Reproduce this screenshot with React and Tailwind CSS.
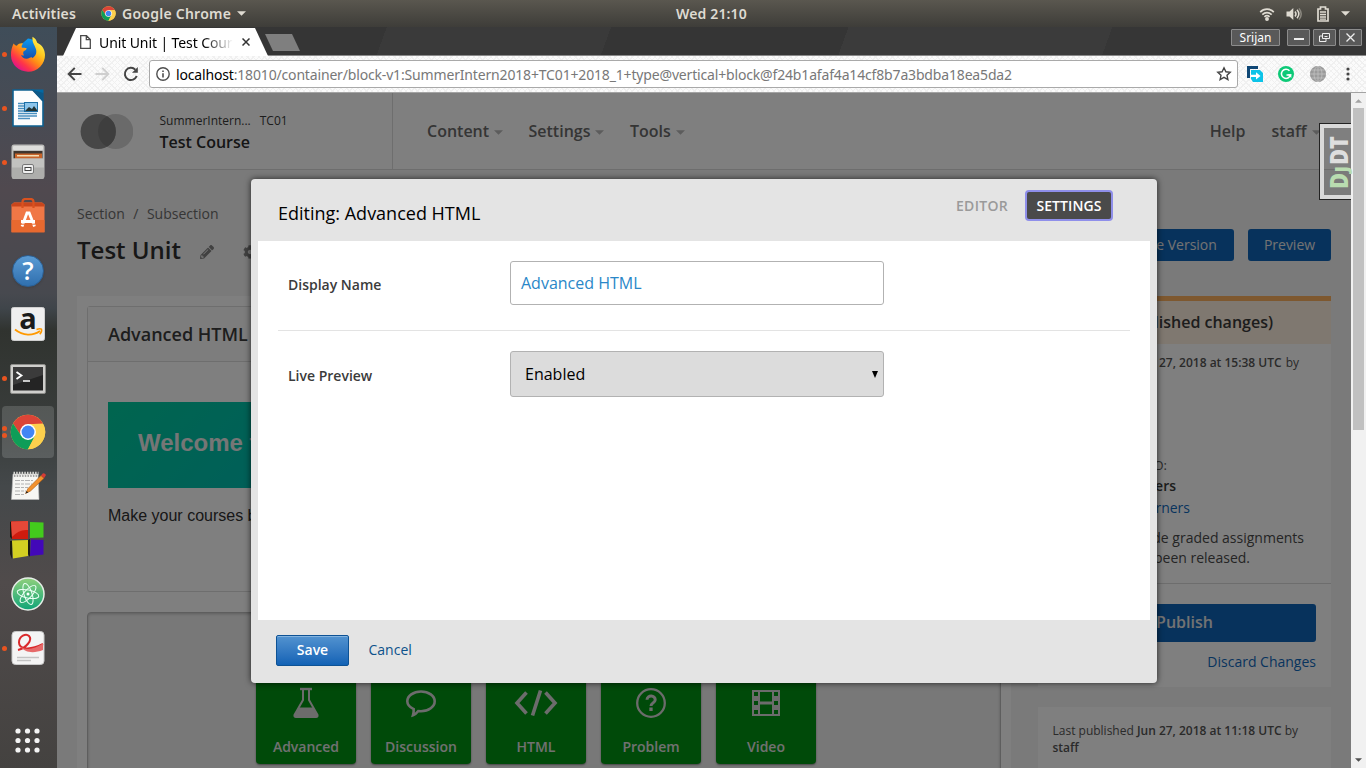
import React from "react";
import { FaPencilAlt, FaCog } from "react-icons/fa";

/* ---------- shared marks ---------- */

function ChromeLogo({ className }) {
  return (
    <svg viewBox="0 0 48 48" className={className}>
      <circle cx="24" cy="24" r="23" fill="#fdd04d" />
      <path d="M4.1 12.5 A23 23 0 0 1 43.9 12.5 L24 13.5 L15 29 Z" fill="#db4437" />
      <path d="M4.1 12.5 A23 23 0 0 0 24 47 L33.5 29.5 L24 34 L15 29 Z" fill="#0f9d58" />
      <path d="M24 13.5 H44.5 A23 23 0 0 1 24 47 L33.1 29.3 Z" fill="#fdd04d" />
      <circle cx="24" cy="24" r="10.6" fill="#fff" />
      <circle cx="24" cy="24" r="8.6" fill="#4285f4" />
    </svg>
  );
}

function Caret({ className }) {
  return (
    <svg viewBox="0 0 10 5" className={className} fill="currentColor">
      <path d="M0 0h10L5 5z" />
    </svg>
  );
}

/* ---------- desktop top bar ---------- */

function TopBar() {
  return (
    <div className="flex h-[27px] w-full shrink-0 items-center bg-linear-to-b from-[#5a574f] to-[#3e3d39] font-['Noto_Sans','Open_Sans',sans-serif] text-[14px] font-semibold text-[#dfdbd2]">
      <div className="w-[89px] pl-3 tracking-[0.15px]">Activities</div>
      <div className="flex w-[587px] items-center pl-3">
        <ChromeLogo className="h-[15px] w-[15px]" />
        <span className="ml-[6px] tracking-[0.25px]">Google Chrome</span>
        <Caret className="ml-[6px] h-[5px] w-[9px]" />
      </div>
      <div className="flex-1 tracking-[0.15px]">Wed 21:10</div>
      <div className="flex items-center pr-4">
        <svg viewBox="0 0 16 14" className="h-[14px] w-4" fill="none" stroke="#dfdbd2" strokeWidth="1.7">
          <path d="M1.2 5.2C5 1.2 11 1.2 14.8 5.2" />
          <path d="M3.3 7.6c2.7-2.6 6.7-2.6 9.4 0" />
          <path d="M5.4 9.9c1.5-1.4 3.7-1.4 5.2 0" />
          <circle cx="8" cy="12" r="1.1" fill="#dfdbd2" />
        </svg>
        <svg viewBox="0 0 16 14" className="ml-[11px] h-[14px] w-4" fill="none" stroke="#dfdbd2" strokeWidth="1.5">
          <path d="M.5 4.5h3L7.3 1v12L3.5 9.500h-3z" fill="#dfdbd2" stroke="none" />
          <path d="M9 4.500c1.200 1.500 1.200 3.500 0 5" />
          <path d="M11 2.800c2.200 2.500 2.200 5.900 0 8.400" />
          <path d="M13 1.400c2.700 3.400 2.700 7.800 0 11.200" stroke="#8a877f" />
        </svg>
        <svg viewBox="0 0 12 16" className="ml-[15px] h-4 w-3" fill="none" stroke="#dfdbd2" strokeWidth="1.700">
          <path d="M1 3h2.500V1h5v2H11v12H1z" />
          <path d="M3 6h6M3 8.500h6M3 11h6M3 13.200h6" strokeWidth="1.300" />
        </svg>
        <Caret className="ml-3 h-[5px] w-[9px]" />
      </div>
    </div>
  );
}

/* ---------- dock ---------- */

function Firefox() {
  return (
    <svg viewBox="0 0 36 36" className="h-9 w-9">
      <defs>
        <linearGradient id="ffbody" x1="0.850" y1="0.1" x2="0.2" y2="0.9">
          <stop offset="0" stopColor="#fff14f" />
          <stop offset="0.300" stopColor="#ffc61e" />
          <stop offset="0.550" stopColor="#ff8a16" />
          <stop offset="0.800" stopColor="#ff3647" />
          <stop offset="1" stopColor="#e31587" />
        </linearGradient>
        <linearGradient id="ffglobe" x1="0" y1="0" x2="0" y2="1">
          <stop offset="0" stopColor="#0a9cf5" />
          <stop offset="1" stopColor="#1c2f8f" />
        </linearGradient>
      </defs>
      <path d="M18 2.500a14 14 0 0 1 13 15A13 13 0 0 1 18 31 13 13 0 0 1 6 13z" fill="url(#ffglobe)" />
      <path d="M3.500 7.500c1 1.200 2 2.100 3.400 2.300C8.500 7.500 11 7 13 7.600c-1 1.200-1.500 2.300-1.300 3.800 1.500.300 3.500 0 5 .900-.300 1.800-2 2.300-3.200 3.200-.500 1.500-.500 2.500.500 3.700-1 .500-2 .300-3-.200 1.300 3.400 5.500 4.800 8.700 2.700 1.400-.900 2.700-.700 2.600.500 3.700-2 4.800-6 3.500-9.400C24.300 8.500 22 6.500 22.500.800c2.700 1.500 4 3.500 4.700 5.900C32 9 35 13 35 19a17 16.500 0 0 1-34 .500C.800 14.500 2 11 3.500 7.500z" fill="url(#ffbody)" />
    </svg>
  );
}

function Writer() {
  return (
    <svg viewBox="0 0 32 38" className="h-[38px] w-8">
      <path d="M1 1h20l10 11v25H1z" fill="#fdfdfd" stroke="#0f6191" strokeWidth="1.600" />
      <path d="M20 .500h11.500V13z" fill="#0369a3" />
      <path d="M19 .500L31.500 13V4z" fill="#18486b" opacity=".5" />
      <g stroke="#4a90c0" strokeWidth="1.300">
        <path d="M6 14.500h7M6 17h7M6 19.500h7M6 22h7M6 24.500h19M6 27h19M6 29.500h12" />
      </g>
      <rect x="12.500" y="13.500" width="13" height="9" fill="#8cc4ea" stroke="#1d6fa5" />
      <path d="M13 22l4-4 3 2 2-3 3 4v1z" fill="#233" />
    </svg>
  );
}

function Files() {
  return (
    <svg viewBox="0 0 34 36" className="h-9 w-[34px]">
      <rect x=".5" y=".5" width="33" height="34" rx="2.500" fill="#bdbdbb" />
      <rect x="2" y="2" width="30" height="4" rx="1" fill="#dededc" />
      <rect x="2.500" y="7" width="29" height="9" fill="#40362f" />
      <path d="M4 9.500h27v6H4z" fill="#c8642a" />
      <path d="M6 11h22v1.500H6z" fill="#f4dcb4" />
      <rect x="1" y="14.500" width="32" height="20.500" rx="1.500" fill="#aeaeac" />
      <rect x="1" y="14.500" width="32" height="9" fill="#c2c2c0" />
      <rect x="11.500" y="20.500" width="11" height="9" rx="1.500" fill="#eee" stroke="#777" />
      <rect x="14" y="23.500" width="6" height="3" fill="#fff" stroke="#444" />
    </svg>
  );
}

function Software() {
  return (
    <svg viewBox="0 0 34 36" className="h-9 w-[34px]">
      <path d="M.500 6.500L3 4.500h28l2.500 2V34H.500z" fill="#f07746" />
      <path d="M.500 6.500L3 4.500h28l2.500 2v2H.500z" fill="#c9461c" />
      <path d="M.500 22h33v12.500H.500z" fill="#e8692f" />
      <path d="M11.500 10V4q0-3 3-3h5q3 0 3 3v6" fill="none" stroke="#d9521f" strokeWidth="2.200" />
      <path d="M11 28.500L16 15h2.200L23.500 28.500M10 23.500h14" fill="none" stroke="#fff" strokeWidth="2.800" />
      <path d="M10 26.200h14" stroke="#e8692f" strokeWidth="1" />
    </svg>
  );
}

function HelpIcon() {
  return (
    <div className="mt-px flex h-8 w-8 items-center justify-center rounded-full border border-[#2b5f93] bg-linear-to-b from-[#5a9bd4] to-[#2f6fae] font-['Open_Sans',sans-serif] text-[25px] leading-none font-semibold text-white shadow">
      ?
    </div>
  );
}

function Amazon() {
  return (
    <svg viewBox="0 0 34 34" className="h-[34px] w-[34px] overflow-visible">
      <rect x=".5" y=".5" width="33" height="33" rx="2" fill="#efefef" stroke="#cfcfcf" />
      <text x="17" y="21.500" textAnchor="middle" fontFamily="Open Sans, sans-serif" fontWeight="700" fontSize="29" fill="#1b1b1b">a</text>
      <path d="M4 22.500c8 6.500 18 6.500 25 1.500" fill="none" stroke="#f90" strokeWidth="1.800" />
      <path d="M25.500 22.500c2-.800 4-1 5-.300.500 1.300-.300 3.300-1.700 5" fill="none" stroke="#f90" strokeWidth="1.500" />
    </svg>
  );
}

function Terminal() {
  return (
    <svg viewBox="0 0 36 30" className="mt-px h-[30px] w-9">
      <rect x=".5" y=".5" width="35" height="29" rx="1.500" fill="#cfcfcc" stroke="#8d8d8a" />
      <rect x="3" y="3" width="30" height="23.500" fill="#242424" />
      <path d="M3 3h30v8L3 21z" fill="#3b3b3b" />
      <path d="M6.500 8l5 3.500-5 3.500" fill="none" stroke="#fff" strokeWidth="1.800" />
      <path d="M13 17h7" stroke="#fff" strokeWidth="1.500" />
    </svg>
  );
}

function Gedit() {
  return (
    <svg viewBox="0 0 36 30" className="h-[30px] w-9">
      <path d="M3 3h25l1 25.500H1.500z" fill="#f6f6f3" stroke="#bbb" strokeWidth=".6" />
      <path d="M3.500 2.500h25" stroke="#d8d8d4" strokeWidth="3.500" strokeDasharray="1.500 1.200" />
      <path d="M4 5h24" stroke="#555" strokeWidth="1.200" strokeDasharray="1.500 1.200" />
      <g stroke="#aaa" strokeWidth=".9" strokeDasharray="5 1 3 1">
        <path d="M5 9.500h18M5 13h17M5 16.500h13M5 20h11M5 23.500h10" />
      </g>
      <path d="M15.500 22.500l2.500-5L31 4.500l3 2.800L20.500 20z" fill="#f2912d" stroke="#a85a14" strokeWidth=".6" />
      <path d="M31 4.500l2-2.200q2-.300 3 1.700L34 7.300z" fill="#d63b35" />
      <path d="M15.500 22.500l1.200-2.400 1.600 1.300z" fill="#222" />
    </svg>
  );
}

function Cubes() {
  return (
    <svg viewBox="0 0 34 38" className="mr-[2px] h-[38px] w-[34px]">
      <path d="M0 1l2-1v18l-2-2zM0 20h2v18l-2-5zM18 19l2-1v18l-2-3z" fill="#1a1a12" />
      <path d="M1 .500l17-.500v18L2 18z" fill="#cf1b0e" />
      <path d="M1 .500l17-.500v9Q9 8 2 16z" fill="#e54838" />
      <path d="M20 1l13.500.500v15L20 17z" fill="#43cb1d" />
      <path d="M2 19.500l16-.500v16L3 37.500z" fill="#d3cf22" />
      <path d="M21 18.500l12.500.500v14.500L20 35z" fill="#4208b8" />
    </svg>
  );
}

function Atom() {
  return (
    <svg viewBox="0 0 34 34" className="h-[34px] w-[34px]">
      <defs>
        <linearGradient id="atombg" x1="0" y1="0" x2="0" y2="1">
          <stop offset="0" stopColor="#8fd07c" />
          <stop offset="1" stopColor="#10a578" />
        </linearGradient>
      </defs>
      <circle cx="17" cy="17" r="16" fill="url(#atombg)" stroke="#e6eee8" strokeWidth="1.500" />
      <g fill="none" stroke="#eafff4" strokeWidth="1">
        <ellipse cx="17" cy="17" rx="11" ry="4" transform="rotate(12 17 17)" />
        <ellipse cx="17" cy="17" rx="11" ry="4" transform="rotate(72 17 17)" />
        <ellipse cx="17" cy="17" rx="11" ry="4" transform="rotate(132 17 17)" />
      </g>
      <circle cx="17" cy="17" r="1.500" fill="#fff" />
    </svg>
  );
}

function Evince() {
  return (
    <svg viewBox="0 0 34 34" className="h-[34px] w-[34px]">
      <rect x="1" y=".5" width="32" height="33" rx="3.500" fill="#f4f4f4" stroke="#c9c9c9" />
      <path d="M7 19C15 17 22 9 18 5 15 2 8 5 8 11.500c0 6 9 9 24 1.500" fill="none" stroke="#d9292b" strokeWidth="2" />
      <path d="M9.500 15.500c6 4.500 14 2.500 22.500-3v6.500c-9 3.500-18 3-22.500-3.500z" fill="#e66a6a" />
      <path d="M6 26.500h22M6 29.500h14" stroke="#c3c3c3" strokeWidth="1.300" />
    </svg>
  );
}

function AppGrid() {
  const dots = [3, 12.5, 22];
  return (
    <svg viewBox="0 0 25 25" className="h-[25px] w-[25px]" fill="#f4f4f4">
      {dots.map((y) => dots.map((x) => <circle key={`${x}-${y}`} cx={x} cy={y} r="2.600" />))}
    </svg>
  );
}

function DockSlot({ children, dots = 0, active = false }) {
  return (
    <div className="relative flex h-[54px] w-[57px] shrink-0 items-center justify-center pr-px">
      {active && <div className="absolute top-px left-[2px] h-[52px] w-[52px] rounded bg-white/15" />}
      <div className="relative">{children}</div>
      {dots > 0 && (
        <div className="absolute top-0 left-[2px] flex h-full flex-col items-center justify-center gap-[2px]">
          {Array.from({ length: dots }, (_, i) => (
            <div key={i} className="h-[5px] w-[5px] rounded-full bg-[#e95420]" />
          ))}
        </div>
      )}
    </div>
  );
}

function Dock() {
  return (
    <div className="flex w-[57px] shrink-0 flex-col bg-[#3f4d59]">
      <div className="flex flex-1 flex-col bg-[linear-gradient(180deg,transparent_0%,#50494f_22%,#47494f_36%,#3f454a_38%,#30332f_41%,#3a3e3d_55%,#44484a_62%,#504b4b_75%,#444240_100%)]">
        <DockSlot dots={1}><Firefox /></DockSlot>
        <DockSlot dots={1}><Writer /></DockSlot>
        <DockSlot dots={1}><Files /></DockSlot>
        <DockSlot><Software /></DockSlot>
        <DockSlot><HelpIcon /></DockSlot>
        <DockSlot><Amazon /></DockSlot>
        <DockSlot dots={1}><Terminal /></DockSlot>
        <DockSlot dots={2} active><ChromeLogo className="h-9 w-9" /></DockSlot>
        <DockSlot><Gedit /></DockSlot>
        <DockSlot><Cubes /></DockSlot>
        <DockSlot><Atom /></DockSlot>
        <DockSlot dots={1}><Evince /></DockSlot>
        <div className="flex flex-1 items-end justify-center pr-[2px] pb-[15px]"><AppGrid /></div>
      </div>
    </div>
  );
}

/* ---------- browser chrome ---------- */

function WindowButton({ children }) {
  return (
    <div className="flex h-[17px] w-[23px] items-center justify-center rounded-[1px] border border-[#8c8c8c] bg-[#595959]">
      {children}
    </div>
  );
}

function TabStrip() {
  return (
    <div className="flex h-[29px] shrink-0 border-b border-[#8a8a8a] bg-[#383838] bg-[linear-gradient(110deg,#353535_0_25%,#3a3a3a_25%_42%,#353535_42%_60%,#3b3b3b_60%_80%,#363636_80%)]">
      <div className="mt-px ml-[6px] -mb-px flex h-[28px] w-[205px] items-center bg-white pl-[17px] [clip-path:polygon(13px_0,192px_0,205px_100%,0_100%)]">
        <svg viewBox="0 0 11 14" className="h-[14px] w-[11px] fill-none stroke-[#4a4a4a]">
          <path d="M.700.700h5.800l3.800 3.800v8.800H.700zM6.300.700v4h4" strokeWidth="1.300" />
        </svg>
        <div className="ml-2 w-[134px] overflow-hidden whitespace-nowrap bg-linear-to-r from-black from-78% to-transparent bg-clip-text font-['Noto_Sans','Open_Sans',sans-serif] text-[14px] tracking-[-0.100px] text-transparent">
          Unit Unit | Test Course
        </div>
        <svg viewBox="0 0 8 8" className="ml-[9px] h-2 w-2 stroke-[#333]" strokeWidth="1.500">
          <path d="M.500.500l7 7M7.500.500l-7 7" />
        </svg>
      </div>
      <div className="mt-[7px] -ml-[3px] h-[17px] w-[35px] bg-[#7f7f7f] [clip-path:polygon(0_0,27px_0,35px_100%,8px_100%)]" />
      <div className="mt-[2px] ml-auto flex items-start gap-[3px] pr-1">
        <div className="mr-1 flex h-[17px] w-[49px] items-center justify-center rounded-[1px] border border-[#8c8c8c] bg-[#595959] font-['Noto_Sans','Open_Sans',sans-serif] text-[12px] text-white">Srijan</div>
        <WindowButton>
          <div className="mt-[3px] h-[2px] w-[10px] bg-[#eee]" />
        </WindowButton>
        <WindowButton>
          <svg viewBox="0 0 11 9" className="h-[9px] w-[11px] fill-none stroke-[#eee]" strokeWidth="1">
            <path d="M3.500.500h7v5h-7zM3.500 3H.500v5.500h6.500V6M5.500 3.500h3" />
          </svg>
        </WindowButton>
        <WindowButton>
          <svg viewBox="0 0 9 9" className="h-[9px] w-[9px] stroke-[#eee]" strokeWidth="1.300">
            <path d="M.500.500l8 8M8.500.500l-8 8" />
          </svg>
        </WindowButton>
      </div>
    </div>
  );
}

function Toolbar() {
  return (
    <div className="flex h-[37px] shrink-0 items-center border-b border-[#a3a3a3] bg-[#fbfbfb] bg-[repeating-linear-gradient(45deg,transparent_0_3px,#f0f0f0_3px_4px),repeating-linear-gradient(-45deg,transparent_0_3px,#f0f0f0_3px_4px)]">
      <svg viewBox="0 0 15 14" className="ml-[10px] h-[14px] w-[15px] fill-none stroke-[#444]" strokeWidth="2">
        <path d="M14.500 7H2M7.800 .900L1.700 7l6.100 6.100" />
      </svg>
      <svg viewBox="0 0 15 14" className="ml-[13px] h-[14px] w-[15px] fill-none stroke-[#cfcfcf]" strokeWidth="2">
        <path d="M.500 7H13M7.200 .900L13.300 7l-6.100 6.100" />
      </svg>
      <svg viewBox="0 0 16 16" className="ml-[13px] h-4 w-4 fill-none stroke-[#444]" strokeWidth="2">
        <path d="M13.700 10A6.100 6.100 0 1 1 12.300 3.600" />
        <path d="M14.800 1v5.800H9z" className="fill-[#444] stroke-none" />
      </svg>
      <div className="ml-[10px] flex h-7 w-[1089px] items-center rounded-[3px] border border-[#a9a9a9] bg-white pr-[5px] pl-[6px]">
        <svg viewBox="0 0 14 14" className="h-[14px] w-[14px] fill-none stroke-[#4e4e4e]" strokeWidth="1.400">
          <circle cx="7" cy="7" r="6.200" />
          <path d="M7 6.200v4.200M7 3.400v1.600" strokeWidth="1.600" />
        </svg>
        <div className="ml-[6px] flex-1 whitespace-nowrap font-['Noto_Sans','Open_Sans',sans-serif] text-[14px] tracking-[-0.165px] text-[#787878]">
          <span className="text-black">localhost</span>:18010/container/block-v1:SummerIntern2018+TC01+2018_1+type@vertical+block@f24b1afaf4a14cf8b7a3bdba18ea5da2
        </div>
        <svg viewBox="0 0 16 16" className="h-4 w-4 fill-none stroke-[#444]" strokeWidth="1.400">
          <path d="M8 1.800l1.900 4 4.300.500-3.200 3 .900 4.300L8 11.400l-3.900 2.200.900-4.300-3.200-3 4.300-.500z" />
        </svg>
      </div>
      <svg viewBox="0 0 16 16" className="ml-[9px] h-4 w-4">
        <path d="M0 0h11v3H3v9H0z" fill="#0f4775" />
        <path d="M4 4h9l3 3v9H6l-2-3z" fill="#0cc3e8" />
        <path d="M4 8.800h5V6.300l4.500 3.700L9 13.600V11H4z" fill="#fff" />
      </svg>
      <svg viewBox="0 0 16 16" className="ml-[15px] h-4 w-4">
        <circle cx="8" cy="8" r="8" fill="#0dc977" />
        <path d="M11.500 4.700A4.600 4.600 0 1 0 12.500 9H8.500" fill="none" stroke="#fff" strokeWidth="1.500" />
        <path d="M13.300 8.300v3.700l-3.700-3.700z" fill="#fff" />
      </svg>
      <svg viewBox="0 0 16 16" className="ml-4 h-4 w-4 fill-none" stroke="#c6c6c6" strokeWidth=".7">
        <circle cx="8" cy="8" r="7.700" fill="#9b9b9b" stroke="#8e8e8e" />
        <path d="M8 0v16M0 8h16M1.500 4h13M1.500 12h13" />
        <ellipse cx="8" cy="8" rx="4" ry="7.700" />
      </svg>
      <svg viewBox="0 0 4 14" className="ml-5 h-[14px] w-1 fill-[#444]">
        <circle cx="2" cy="2" r="1.600" />
        <circle cx="2" cy="7" r="1.600" />
        <circle cx="2" cy="12" r="1.600" />
      </svg>
    </div>
  );
}

/* ---------- course page ---------- */

function NavItem({ label, className }) {
  return (
    <div className={`flex items-center ${className}`}>
      {label}
      <Caret className="mt-[2px] ml-[5px] h-[5px] w-[9px] text-[#b8b8b8]" />
    </div>
  );
}

function SiteHeader() {
  return (
    <header className="flex h-[77px] shrink-0 border-b border-[#dadada] bg-white">
      <div className="flex w-[336px] border-r border-[#dcdcdc]">
        <svg viewBox="0 0 53 37" className="mt-5 ml-[23px] h-[37px] w-[53px]">
          <circle cx="35.700" cy="18.500" r="17.600" fill="#d5d5d5" />
          <circle cx="18.200" cy="18.500" r="17.600" fill="#8e8e8e" />
          <path d="M26.950 3.200a17.600 17.600 0 0 1 0 30.600a17.600 17.600 0 0 1 0-30.600z" fill="#7c7c7c" />
        </svg>
        <div className="ml-[26.500px] flex flex-col pt-[18px] text-[#3a3a3a]">
          <div className="flex h-5 items-center gap-[9px] text-[12px]">
            <span>SummerIntern...</span>
            <span>TC01</span>
          </div>
          <div className="flex h-[22px] items-center text-[16px] font-semibold text-[#2c2c2c]">Test Course</div>
        </div>
      </div>
      <nav className="flex flex-1 items-center text-[16px] font-semibold text-[#6a6a6a]">
        <NavItem label="Content" className="ml-[34px] w-[101.500px]" />
        <NavItem label="Settings" className="w-[101.500px]" />
        <NavItem label="Tools" className="w-[102px]" />
        <div className="mr-[26px] ml-auto">Help</div>
        <NavItem label="staff" className="mr-[30.500px]" />
      </nav>
    </header>
  );
}

function SolidButton({ className, children }) {
  return (
    <div className={`flex items-center justify-center rounded-[3px] bg-[#0f65b8] pb-[2px] text-[#e6e6e6] ${className}`}>{children}</div>
  );
}

function UnitHeading() {
  return (
    <div className="flex h-[126px] shrink-0 justify-between">
      <div className="pt-[33px]">
        <div className="flex h-5 items-center gap-[8.500px] text-[14px] text-[#6c6c6c]">
          <span>Section</span>
          <span>/</span>
          <span>Subsection</span>
        </div>
        <div className="mt-2 flex h-[38px] items-center text-[24px] font-semibold text-[#2e2e2e]">
          Test Unit
          <FaPencilAlt className="mt-[3px] ml-[19px] h-[14px] w-[14px] text-[#838383]" />
          <FaCog className="mt-[3px] ml-[29px] h-[14px] w-[14px] text-[#838383]" />
        </div>
      </div>
      <div className="flex items-start gap-[14px] pt-[59px] text-[14px]">
        <SolidButton className="h-8 w-[147px]">View Live Version</SolidButton>
        <SolidButton className="h-8 w-[83px]">Preview</SolidButton>
      </div>
    </div>
  );
}

function ComponentButton({ label, children }) {
  return (
    <div className="flex h-[101px] w-[100px] flex-col items-center rounded-[4px] bg-[#009413] pl-px text-[14px] font-semibold text-[#e2e2e2] shadow-[0_1px_2px_#888]">
      <div className="mt-[22px] flex h-[36px] items-center justify-center">{children}</div>
      <div className="mt-[15px] flex h-5 items-center">{label}</div>
    </div>
  );
}

function AddComponent() {
  return (
    <div className="flex h-[200px] shrink-0 items-start justify-center gap-[15px] rounded-[4px] border border-[#bdbdbd] bg-[#f0f0f0] pt-[50px] pr-[17px] shadow-[inset_0_1px_3px_#bbb]">
      <ComponentButton label="Advanced">
        <svg viewBox="0 0 30 32" className="h-8 w-[30px] fill-none stroke-[#d8d8d8]" strokeWidth="2">
          <path d="M9 2h12" strokeWidth="2.400" />
          <path d="M12 2v11L3.500 28q-.500 1.800 1.500 2h20q2-.200 1.500-2L18 13V2" />
          <path d="M8 20.500h14l5 8.500q0 1-1 1H4q-1 0-1-1z" className="fill-[#d8d8d8] stroke-none" />
        </svg>
      </ComponentButton>
      <ComponentButton label="Discussion">
        <svg viewBox="0 0 32 30" className="h-[30px] w-8 fill-none stroke-[#d8d8d8]" strokeWidth="2.600">
          <path d="M16 3.500c7.800 0 13.700 4.400 13.700 9.800s-6 9.900-13.700 9.900l-2.700-.200c-1.500 2-3.200 3.500-5.300 4.200.5-1.700.800-3.500.700-6C4.700 19.300 2.300 16.700 2.300 13.300c0-5.400 6-9.800 13.700-9.800z" />
        </svg>
      </ComponentButton>
      <ComponentButton label="HTML">
        <svg viewBox="0 0 44 28" className="h-7 w-11 fill-none stroke-[#d8d8d8]" strokeWidth="3.600">
          <path d="M12.500 3.500L3 14l9.500 10.500M31.500 3.500L41 14l-9.500 10.500M26.500 1.500l-8 25" />
        </svg>
      </ComponentButton>
      <ComponentButton label="Problem">
        <svg viewBox="0 0 32 32" className="h-8 w-8 fill-none stroke-[#d8d8d8]">
          <circle cx="16" cy="16" r="13.800" strokeWidth="2.300" />
          <path d="M12 12.800c.200-5.300 8.500-4.800 8.200.200-.200 2.800-4.300 3-4.200 6" strokeWidth="3" />
          <path d="M16 20.500v3.500" strokeWidth="3.300" />
        </svg>
      </ComponentButton>
      <ComponentButton label="Video">
        <svg viewBox="0 0 28 26" className="h-[26px] w-7" fillRule="evenodd" fill="#d8d8d8">
          <path d="M0 0h28v26H0zM2 2h4v4H2zM2 11h4v4H2zM2 20h4v4H2zM22 2h4v4h-4zM22 11h4v4h-4zM22 20h4v4h-4zM8 2h12v9.500H8zM8 14.500h12v9.500H8z" />
        </svg>
      </ComponentButton>
    </div>
  );
}

function UnitContent() {
  return (
    <section className="flex w-[934px] flex-col gap-5 bg-white p-[10px]">
      <div className="h-[286px] shrink-0 rounded-[3px] border border-[#dcdcdc] bg-white">
        <div className="flex h-[55px] items-center border-b border-[#dcdcdc] bg-[#fafafa] pl-5 text-[18px] font-semibold text-[#3c3c3c]">Advanced HTML</div>
        <div className="pt-10 pr-5 pl-5 font-['Liberation_Sans',sans-serif]">
          <div className="flex h-[86px] items-center bg-[linear-gradient(135deg,#00cb9e_0%,#00c0b0_22%,#00a8c0_100%)] pb-[5px] pl-[30px] text-[24px] font-bold text-[#ececec]">
            Welcome to your course
          </div>
          <div className="mt-[16px] text-[16px] text-[#303030]">Make your courses better with HTML</div>
        </div>
      </div>
      <AddComponent />
    </section>
  );
}

function Sidebar() {
  return (
    <aside className="flex w-[293px] flex-col gap-5 text-[#555]">
      <div className="h-[391px] shrink-0 border-t-[5px] border-[#fcb15e] bg-white">
        <div className="flex h-[43px] items-center justify-end bg-[#fff0e0] pr-[58px] pb-[2px] text-[16px] font-semibold text-[#3a3a3a]">Draft (Unpublished changes)</div>
        <div className="flex h-[38px] items-center justify-end gap-1 pr-[32px] text-[12px] whitespace-nowrap">
          Draft saved on <b className="font-semibold">Jun 27, 2018 at 15:38 UTC</b> by
        </div>
        <div className="mt-[73px] h-5 w-[129px] text-right text-[13px] leading-5">RELEASED TO:</div>
        <div className="h-[22px] w-[138px] text-right text-[14px] leading-[22px] font-semibold text-[#3a3a3a]">All Learners</div>
        <div className="h-[22px] w-[152px] text-right text-[14px] leading-[22px] text-[#1069bc]">All Learners</div>
        <div className="mt-[9px] flex h-10 flex-col text-right text-[14px] leading-5 text-[#4a4a4a]">
          <span className="pr-[27px]">does not include graded assignments</span>
          <span className="pr-[81px]">that have been released.</span>
        </div>
        <div className="mt-[15px] border-t border-[#dadada] px-[15px] pt-5">
          <SolidButton className="h-[38px] w-full text-[16px] font-semibold">Publish</SolidButton>
          <div className="mt-[10px] text-right text-[14px] leading-5 text-[#1069bc]">Discard Changes</div>
        </div>
      </div>
      <div className="h-[100px] shrink-0 bg-white px-[14.500px] pt-[15px] text-[12px] leading-[17px] whitespace-nowrap">
        Last published <b className="font-semibold">Jun 27, 2018 at 11:18 UTC</b> by<br />
        <b className="font-semibold">staff</b>
      </div>
    </aside>
  );
}

function CoursePage() {
  return (
    <div className="flex h-full w-full flex-col overflow-hidden bg-[#f4f4f4]">
      <SiteHeader />
      <main className="flex min-h-0 flex-1 flex-col px-5">
        <UnitHeading />
        <div className="flex shrink-0 justify-between">
          <UnitContent />
          <Sidebar />
        </div>
      </main>
    </div>
  );
}

/* ---------- editor dialog ---------- */

function SettingRow({ label, children, className }) {
  return (
    <div className={`flex items-center pl-[10px] ${className}`}>
      <label className="w-[222px] text-[14px] font-semibold text-[#3b3b3b]">{label}</label>
      {children}
    </div>
  );
}

function EditorDialog() {
  return (
    <div className="flex h-[504px] w-[906px] flex-col rounded-[4px] bg-[#e4e4e4] px-[7px] text-black shadow-[0_0_6px_rgba(0,0,0,0.700)]">
      <div className="flex h-[62px] shrink-0 items-start pr-[37px] pl-5">
        <h2 className="mt-[22px] flex-1 text-[18px] leading-6">Editing: Advanced HTML</h2>
        <div className="mt-[11px] flex h-[31px] items-center text-[14px] font-semibold">
          <span className="pr-[17px] pb-px tracking-[0.300px] text-[#9a9a9a]">EDITOR</span>
          <span className="flex h-[31px] w-[88px] items-center justify-center rounded-[4px] border-2 border-[#8f8fea] bg-[#4a4a4a] pb-px tracking-[0.100px] text-white">SETTINGS</span>
        </div>
      </div>
      <div className="h-[379px] shrink-0 bg-white px-5">
        <SettingRow label="Display Name" className="h-[90px] border-b border-[#e3e3e3] pb-1 [&>label]:pt-[2px]">
          <div className="mt-[-2px] flex h-11 w-[374px] items-center rounded-[3px] border border-[#b2b2b2] bg-white pl-[10px] text-[16px] text-[#2a87c8]">Advanced HTML</div>
        </SettingRow>
        <SettingRow label="Live Preview" className="h-[88px] pb-[2px] [&>label]:pt-[3px]">
          <div className="flex h-[46px] w-[374px] items-center justify-between rounded-[3px] border border-[#b2b2b2] bg-[#dcdcdc] pr-[5px] pl-[14px] text-[16px]">
            Enabled
            <svg viewBox="0 0 6 7" className="h-[7px] w-[6px]"><path d="M0 0h6L3 7z" /></svg>
          </div>
        </SettingRow>
      </div>
      <div className="flex h-[63px] items-start pt-[15px] pl-[18px] text-[14px]">
        <div className="flex h-[31px] w-[73px] items-center justify-center rounded-[2px] border border-[#0d5295] bg-linear-to-b from-[#5293d0] to-[#1162b5] pb-[2px] font-semibold text-white shadow-[inset_0_1px_0_#83b3df]">Save</div>
        <div className="ml-[19.500px] flex h-[31px] items-center pb-[2px] text-[#0c528b]">Cancel</div>
      </div>
    </div>
  );
}

function DebugHandle() {
  return (
    <div className="absolute top-[30px] right-0 h-[77px] w-8 border border-r-0 border-[#222]">
      <div className="h-full w-full border-4 border-r-0 border-[#d9d9d9]">
        <svg viewBox="0 0 27 67" className="h-[67px] w-[27px] overflow-visible">
          <g transform="translate(24 61) rotate(-90)" fontFamily="Open Sans, sans-serif" fontWeight="800">
            <text x="0" y="0" fontSize="25" textLength="16" lengthAdjust="spacingAndGlyphs" fill="#b9dcb0">D</text>
            <text x="16.500" y="0" fontSize="18" textLength="6.500" lengthAdjust="spacingAndGlyphs" fill="#b9dcb0">J</text>
            <text x="24" y="0" fontSize="25" textLength="29" lengthAdjust="spacingAndGlyphs" fill="#dedede">DT</text>
          </g>
        </svg>
      </div>
    </div>
  );
}

function Scrollbar() {
  return (
    <div className="flex w-[15px] shrink-0 flex-col items-center bg-[#f1f1f1]">
      <div className="flex h-[15px] items-center"><Caret className="h-1 w-[7px] rotate-180 text-[#a3a3a3]" /></div>
      <div className="h-[322px] w-[11px] bg-[#c1c1c1]" />
      <div className="mt-auto flex h-[17px] items-center"><Caret className="h-1 w-[7px] text-[#505050]" /></div>
    </div>
  );
}

export default function App() {
  return (
    <div className="flex h-[768px] w-[1366px] flex-col overflow-hidden bg-[#383838] font-['Open_Sans',sans-serif]">
      <TopBar />
      <div className="flex min-h-0 flex-1">
        <Dock />
        <div className="flex min-w-0 flex-1 flex-col">
          <TabStrip />
          <Toolbar />
          <div className="flex min-h-0 flex-1">
            <div className="relative min-w-0 flex-1">
              <CoursePage />
              <div className="absolute inset-0 bg-black/50 pt-[86px] pl-[194px]">
                <EditorDialog />
              </div>
              <DebugHandle />
            </div>
            <Scrollbar />
          </div>
        </div>
      </div>
    </div>
  );
}
